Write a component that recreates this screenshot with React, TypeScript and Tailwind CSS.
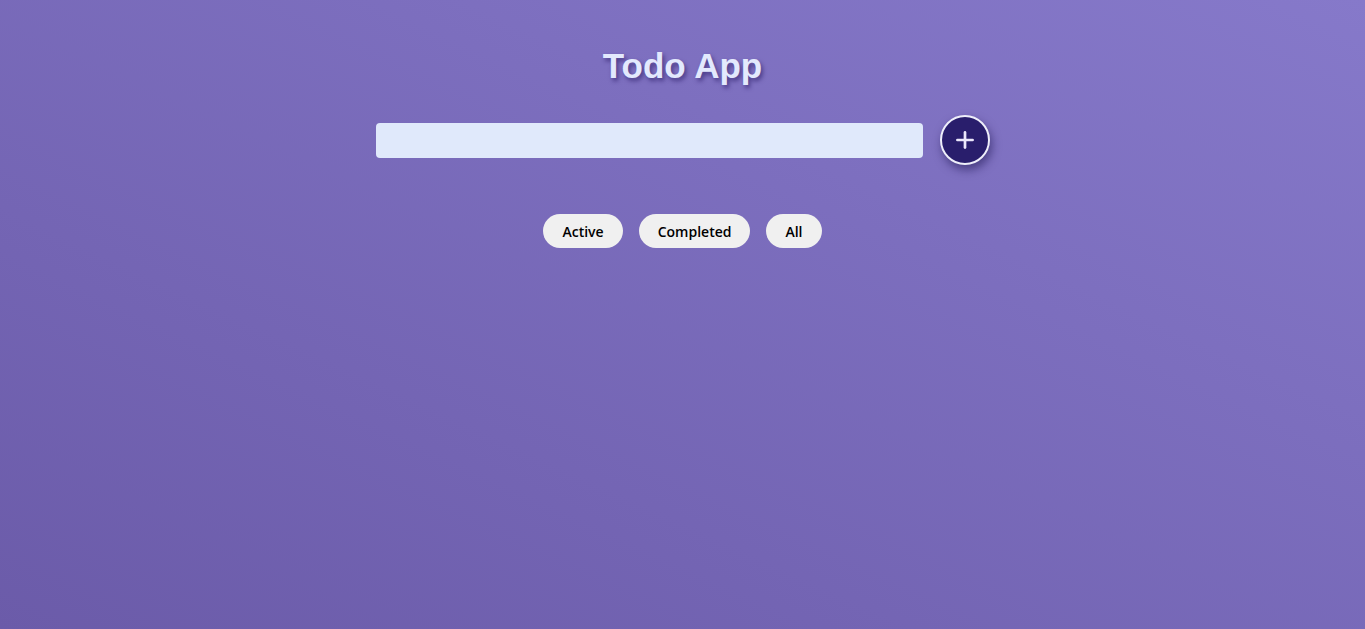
import { Plus } from 'lucide-react';

export default function App() {
  const filters = ['Active', 'Completed', 'All'];

  return (
    <div className="min-h-screen w-full bg-gradient-to-bl from-[#8679ca] to-[#6b5ba9] font-['Open_Sans',sans-serif]">
      <div className="flex flex-col items-center pt-[42px]">
        <h1 className="text-[35px] leading-[48px] font-bold text-[#e3e9fd] font-['Liberation_Sans',Arial,sans-serif] [text-shadow:2px_3px_4px_rgba(40,25,100,0.6)]">
          Todo App
        </h1>

        <div className="flex items-center gap-[17px] mt-[25px]">
          <input
            type="text"
            className="w-[547px] h-[35px] rounded-[4px] bg-[#e0e9fb] px-3 text-sm outline-none"
          />
          <button className="w-[50px] h-[50px] rounded-full bg-[#291e6c] border-2 border-[#eeeefa] flex items-center justify-center shadow-[2px_5px_10px_rgba(30,20,80,0.55)]">
            <Plus className="w-[26px] h-[26px] text-[#ece8fb]" strokeWidth={2.5} />
          </button>
        </div>

        <div className="flex gap-4 mt-[49px]">
          {filters.map((f) => (
            <button
              key={f}
              className="h-[34px] px-[19px] rounded-full bg-[#f0f0f0] text-[14px] font-semibold text-black"
            >
              {f}
            </button>
          ))}
        </div>
      </div>
    </div>
  );
}
